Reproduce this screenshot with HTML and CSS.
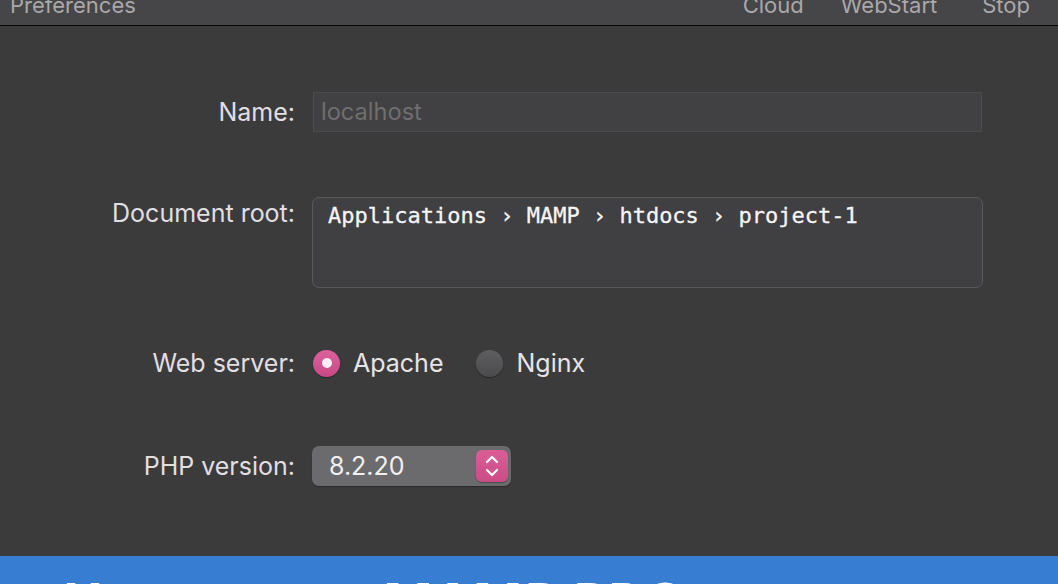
FILE: index.html
```html
<!DOCTYPE html>
<html>
<head>
<meta charset="utf-8">
<link rel="stylesheet" href="styles.css">
</head>
<body>
<div class="page">
  <div class="topbar">
    <div class="topbar-inner">
      <span class="tb-title">Preferences</span>
      <span class="tb-spacer"></span>
      <span class="tb-item tb-cloud">Cloud</span>
      <span class="tb-item tb-webstart">WebStart</span>
      <span class="tb-item tb-stop">Stop</span>
    </div>
  </div>
  <div class="main">
    <div class="row row-name">
      <div class="label">Name:</div>
      <div class="field-name">localhost</div>
    </div>
    <div class="row row-root">
      <div class="label label-top">Document root:</div>
      <div class="field-root">Applications › MAMP › htdocs › project-1</div>
    </div>
    <div class="row row-server">
      <div class="label">Web server:</div>
      <div class="radios">
        <div class="radio-opt">
          <span class="radio radio-on"><span class="radio-dot"></span></span>
          <span class="radio-text">Apache</span>
        </div>
        <div class="radio-opt">
          <span class="radio radio-off"></span>
          <span class="radio-text">Nginx</span>
        </div>
      </div>
    </div>
    <div class="row row-php">
      <div class="label">PHP version:</div>
      <div class="popup">
        <span class="popup-text">8.2.20</span>
        <span class="stepper">
          <svg width="32" height="32" viewBox="0 0 32 32">
            <path d="M11 12 L16 7 L21 12" fill="none" stroke="#ffffff" stroke-width="2.2" stroke-linecap="round" stroke-linejoin="round"/>
            <path d="M11 20 L16 25 L21 20" fill="none" stroke="#ffffff" stroke-width="2.2" stroke-linecap="round" stroke-linejoin="round"/>
          </svg>
        </span>
      </div>
    </div>
  </div>
  <div class="banner">
    <h2 class="banner-title">How to use MAMP PRO</h2>
  </div>
</div>
</body>
</html>
```

FILE: styles.css
```css
* { box-sizing: border-box; }
html, body { margin: 0; padding: 0; }
body {
  background: #3c3b3c;
  font-family: "Inter", "Liberation Sans", sans-serif;
  overflow: hidden;
}
.page {
  width: 1058px;
  height: 584px;
  display: flex;
  flex-direction: column;
  overflow: hidden;
}
.topbar {
  height: 26px;
  flex: 0 0 26px;
  background: #464547;
  border-bottom: 1px solid #050505;
  overflow: hidden;
}
.topbar-inner {
  display: flex;
  align-items: flex-start;
  margin-top: -8px;
  padding-left: 10px;
  font-size: 22px;
  line-height: 26px;
  color: #a9a8aa;
}
.tb-spacer { flex: 1; }
.tb-cloud { margin-right: 37px; }
.tb-webstart { margin-right: 45px; }
.tb-stop { margin-right: 28px; }

.main {
  flex: 1;
  display: flex;
  flex-direction: column;
  padding-right: 75px;
}
.row {
  display: flex;
  align-items: center;
}
.label {
  width: 295px;
  flex: 0 0 295px;
  text-align: right;
  font-size: 25px;
  line-height: 32px;
  color: #e0dfe1;
}
.label-top { align-self: flex-start; }

.row-name { margin-top: 66px; height: 40px; }
.field-name {
  margin-left: 18px;
  flex: 1;
  height: 40px;
  background: #414042;
  border: 1px solid #4c4b4d;
  font-size: 23.6px;
  line-height: 38px;
  color: #6f6e70;
  padding-left: 7px;
  margin-right: 1px;
}

.row-root { margin-top: 65px; align-items: flex-start; }
.field-root {
  margin-left: 17px;
  flex: 1;
  height: 91px;
  background: #403f41;
  border: 1px solid #59585a;
  border-radius: 7px;
  font-family: "DejaVu Sans Mono", "Liberation Mono", monospace;
  font-size: 22px;
  line-height: 30px;
  color: #f5f5f5;
  padding: 3px 0 0 15px;
  -webkit-text-stroke: 0.3px #f5f5f5;
}

.row-server { margin-top: 55px; height: 40px; }
.radios {
  margin-left: 18px;
  display: flex;
  align-items: center;
}
.radio-opt {
  display: flex;
  align-items: center;
}
.radio-opt + .radio-opt { margin-left: 33px; }
.radio {
  width: 27px;
  height: 27px;
  border-radius: 50%;
  display: flex;
  align-items: center;
  justify-content: center;
  box-shadow: 0 1px 1px rgba(0,0,0,0.35);
}
.radio-on {
  background: linear-gradient(#db629c, #c74886);
}
.radio-dot {
  width: 10px;
  height: 10px;
  border-radius: 50%;
  background: #fbeff5;
}
.radio-off {
  background: linear-gradient(#5e5d5f, #4b4a4c);
}
.radio-text {
  margin-left: 13px;
  font-size: 25px;
  line-height: 32px;
  color: #e6e5e6;
}

.row-php { margin-top: 63px; height: 40px; }
.popup {
  margin-left: 17px;
  width: 199px;
  height: 40px;
  border-radius: 7px;
  background: #6b6a6c;
  box-shadow: 0 1px 1px rgba(0,0,0,0.3);
  display: flex;
  align-items: center;
  padding-left: 17px;
  padding-right: 3px;
}
.popup-text {
  flex: 1;
  font-size: 25px;
  line-height: 32px;
  color: #f1f0f1;
}
.stepper {
  width: 32px;
  height: 32px;
  border-radius: 6px;
  background: linear-gradient(#d95e98, #cc4c88);
  display: flex;
  box-shadow: 0 1px 1px rgba(0,0,0,0.3);
}

.banner {
  flex: 0 0 28px;
  height: 28px;
  background: #377ed3;
  overflow: hidden;
}
.banner-title {
  margin: 0;
  padding: 18px 0 0 62px;
  font-family: "Open Sans", "Liberation Sans", sans-serif;
  font-weight: 700;
  font-size: 55px;
  line-height: 55px;
  color: #ffffff;
  white-space: nowrap;
}
```
